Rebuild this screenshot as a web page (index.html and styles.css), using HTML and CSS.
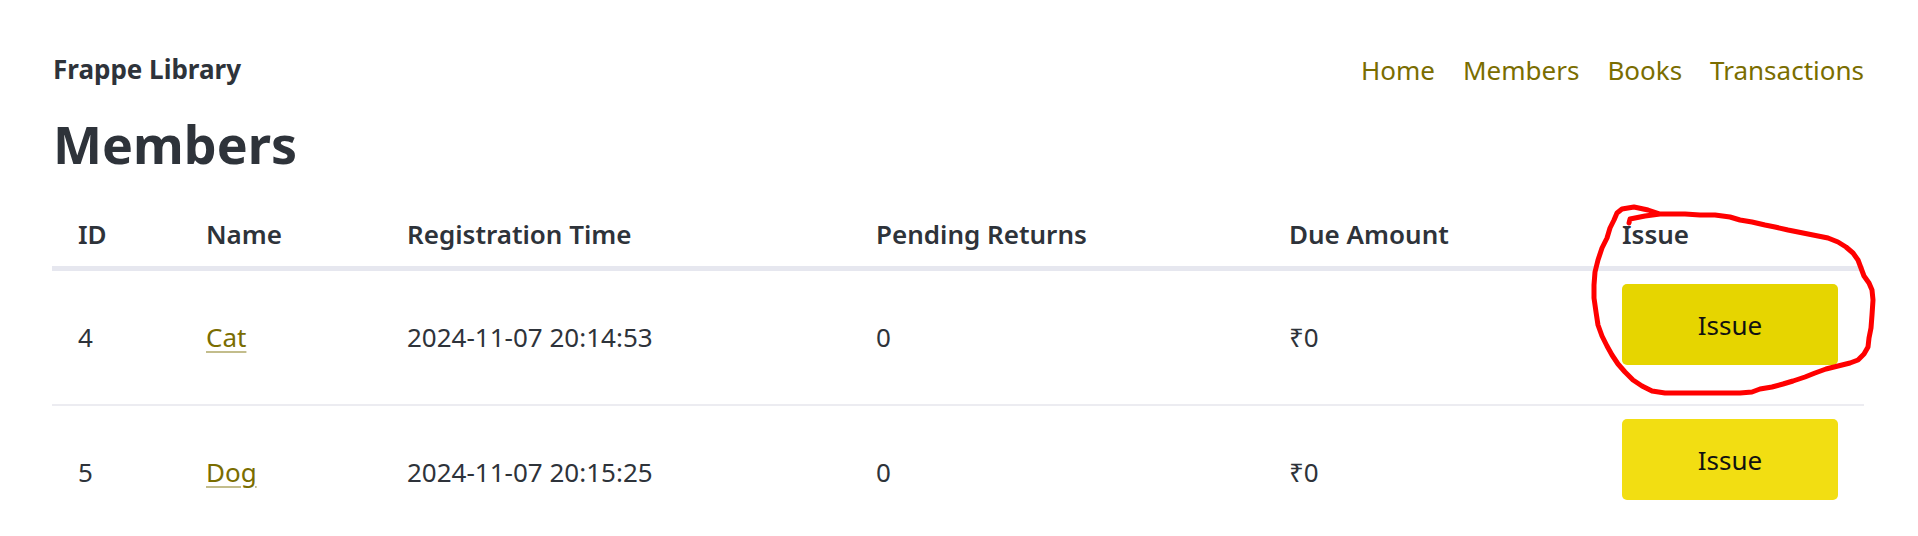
FILE: index.html
```html
<!DOCTYPE html>
<html lang="en">
<head>
<meta charset="utf-8">
<title>Members</title>
<link rel="stylesheet" href="styles.css">
</head>
<body>
<div class="page">
  <header class="navbar">
    <a class="brand">Frappe Library</a>
    <nav class="nav">
      <a class="nav-link">Home</a>
      <a class="nav-link">Members</a>
      <a class="nav-link">Books</a>
      <a class="nav-link">Transactions</a>
    </nav>
  </header>
  <h1 class="title">Members</h1>
  <table class="members">
    <colgroup>
      <col class="c-id">
      <col class="c-name">
      <col class="c-reg">
      <col class="c-pend">
      <col class="c-due">
      <col class="c-issue">
    </colgroup>
    <thead>
      <tr>
        <th>ID</th>
        <th>Name</th>
        <th>Registration Time</th>
        <th>Pending Returns</th>
        <th>Due Amount</th>
        <th>Issue</th>
      </tr>
    </thead>
    <tbody>
      <tr>
        <td>4</td>
        <td><a class="link">Cat</a></td>
        <td>2024-11-07 20:14:53</td>
        <td>0</td>
        <td>₹0</td>
        <td class="action"><button class="btn btn-hover">Issue</button></td>
      </tr>
      <tr>
        <td>5</td>
        <td><a class="link">Dog</a></td>
        <td>2024-11-07 20:15:25</td>
        <td>0</td>
        <td>₹0</td>
        <td class="action"><button class="btn">Issue</button></td>
      </tr>
    </tbody>
  </table>
</div>
<svg class="annotation" width="1918" height="536" viewBox="0 0 1918 536">
  <path d="M1629,223 L1630,219 L1645,216 L1660,214 L1648,210 L1634,207 L1622,209 L1617,213 L1614,220 L1610,228 L1607,238 L1602,248 L1598,260 L1595,272 L1594,285 L1594,298 L1596,312 L1598,325 L1602,336 L1607,346 L1612,355 L1618,364 L1625,372 L1633,380 L1642,386 L1652,391 L1665,393 L1700,393 L1740,393 L1752,392 L1760,389 L1772,387 L1783,384 L1793,381 L1805,377 L1815,373 L1826,369 L1838,366 L1850,363 L1858,360 L1864,354 L1868,347 L1869,338 L1871,328 L1872,315 L1873,300 L1872,290 L1869,283 L1864,276 L1861,268 L1858,260 L1853,253 L1846,247 L1838,242 L1828,238 L1818,236 L1808,234 L1798,232 L1788,230 L1775,227 L1765,225 L1752,222 L1740,220 L1730,217 L1715,215 L1700,215 L1685,214 L1672,214 L1660,214" />
</svg>
</body>
</html>
```
FILE: styles.css
```css
html, body {
  margin: 0;
  padding: 0;
  background: #ffffff;
}

body {
  font-family: "Noto Sans", "Open Sans", sans-serif;
  font-size: 26px;
  line-height: 39px;
  color: #2e333a;
}

.page {
  padding: 50px 54px 0 52px;
}

.navbar {
  display: flex;
  justify-content: space-between;
  align-items: flex-start;
}

.brand {
  font-weight: 700;
  font-size: 26px;
  color: #2e333a;
  padding-left: 1px;
}

.nav {
  display: flex;
  gap: 28px;
  margin-top: 1px;
}

.nav-link {
  color: #7a6d00;
}

.title {
  margin: 23px 0 27px 1px;
  font-size: 52px;
  line-height: 62px;
  font-weight: 700;
  color: #2e333a;
}

.members {
  width: 1812px;
  border-collapse: collapse;
  table-layout: fixed;
}

.c-id { width: 128px; }
.c-name { width: 201px; }
.c-reg { width: 469px; }
.c-pend { width: 413px; }
.c-due { width: 333px; }
.c-issue { width: 268px; }

.members th {
  text-align: left;
  font-weight: 600;
  padding: 13px 26px 12px 26px;
  border-bottom: 5px solid #e6e7ef;
  vertical-align: bottom;
}

.members td {
  padding: 13px 26px;
  vertical-align: middle;
}

.members tbody tr + tr td {
  border-top: 2px solid #ececf1;
}

.link {
  color: #7a6d00;
  text-decoration: underline;
  text-decoration-color: rgba(122, 109, 0, 0.45);
  text-decoration-thickness: 2px;
  text-underline-offset: 4px;
}

.action {
  vertical-align: top;
}

.btn {
  display: block;
  width: 216px;
  height: 81px;
  margin: 0 0 26px 0;
  border: none;
  border-radius: 5px;
  background: #f2de12;
  color: #111111;
  font-family: "Noto Sans", "Open Sans", sans-serif;
  font-size: 26px;
  padding: 0;
}

.btn-hover {
  background: #e6d500;
}

.annotation {
  position: absolute;
  left: 0;
  top: 0;
  pointer-events: none;
  fill: none;
  stroke: #ff0000;
  stroke-width: 5;
  stroke-linejoin: round;
  stroke-linecap: round;
}
```
